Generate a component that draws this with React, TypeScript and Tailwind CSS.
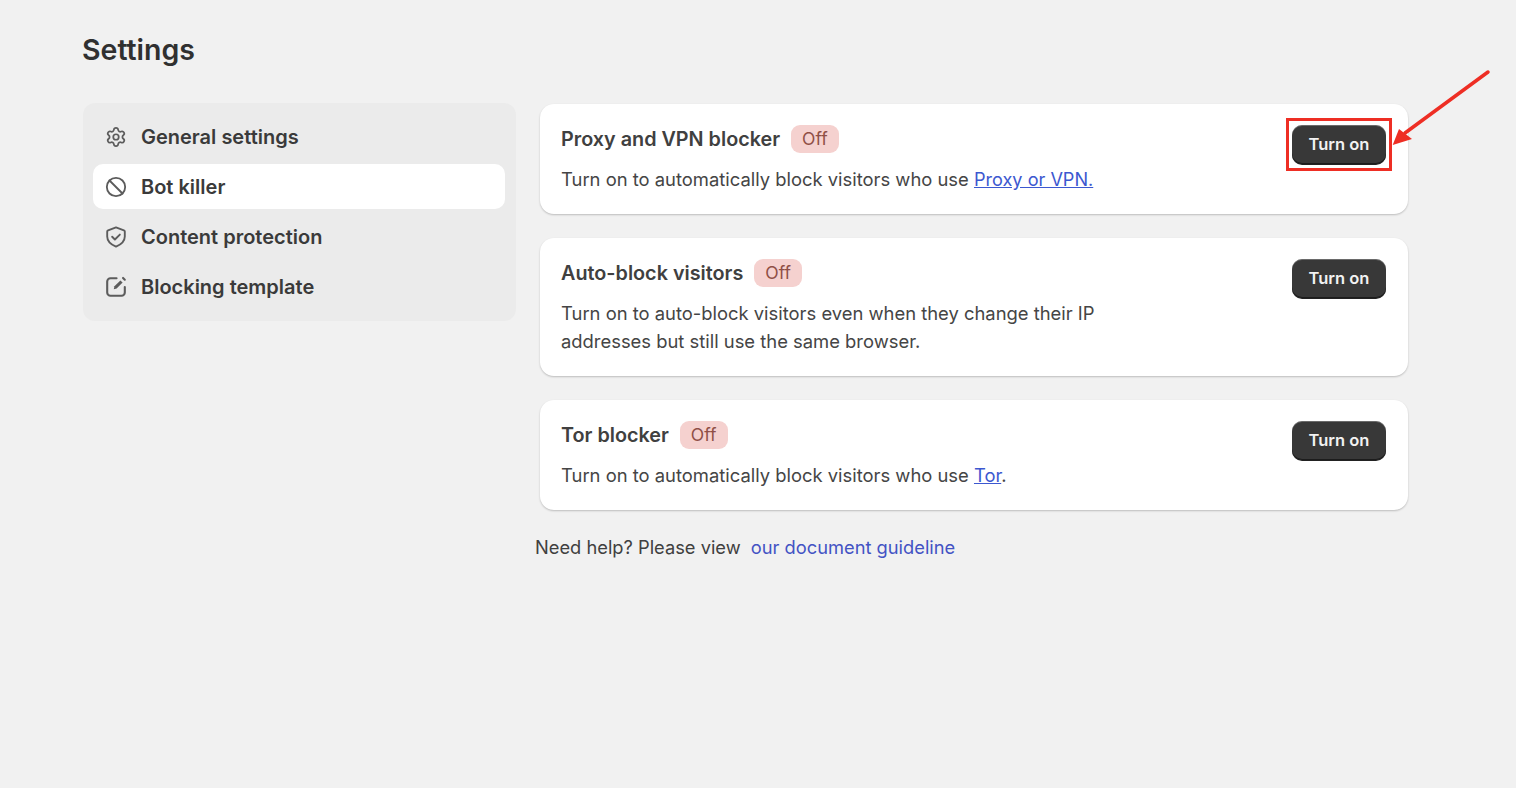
import type { ReactNode } from "react";
import { Ban, Settings } from "lucide-react";

const font = { fontFamily: "Inter, sans-serif" };

function ShieldIcon() {
  return (
    <svg viewBox="0 0 20 20" fill="none" stroke="#5c5c5c" strokeWidth="1.7" strokeLinecap="round" strokeLinejoin="round" className="h-[22px] w-[22px]">
      <path d="M10 1.200l7.200 2.700c.5.200.8.600.8 1.100v4.500c0 4.200-3.200 7.200-8 9.300-4.800-2.100-8-5.100-8-9.300V5c0-.5.3-.9.800-1.100z" />
      <path d="M6.500 9.800l2.500 2.500 4.500-4.500" />
    </svg>
  );
}

function EditIcon() {
  return (
    <svg viewBox="0 0 20 20" fill="none" stroke="#5c5c5c" strokeWidth="1.9" strokeLinecap="round" strokeLinejoin="round" className="h-[22px] w-[22px]">
      <path d="M10.500 2H5a3 3 0 0 0-3 3v10a3 3 0 0 0 3 3h10a3 3 0 0 0 3-3V10" />
      <path d="M8 12l.6-2.600 5.400-5.400 2 2-5.400 5.400z" fill="#5c5c5c" stroke="none" />
      <path d="M16.400 1.800l1.600 1.600" />
    </svg>
  );
}

function NavItem({ icon, label, active }: { icon: ReactNode; label: string; active?: boolean }) {
  return (
    <div className={`flex h-[45px] items-center gap-[14px] rounded-[10px] pl-[12px] ${active ? "bg-white" : ""}`}>
      {icon}
      <span className="text-[20px] font-semibold leading-none text-[#3a3a3a]">{label}</span>
    </div>
  );
}

function BlockerCard({ title, height, children, marked }: { title: string; height: string; children: ReactNode; marked?: boolean }) {
  return (
    <article className={`flex items-start justify-between rounded-[14px] bg-white pl-[21px] pr-[22px] pt-[21px] shadow-[0_1px_2px_rgba(0,0,0,0.22)] ${height}`}>
      <div>
        <div className="flex h-[28px] items-center gap-[11px] pt-[1px]">
          <h2 className="text-[19.8px] font-semibold leading-none text-[#404040]">{title}</h2>
          <span className="mt-[-1px] flex h-[28px] items-center rounded-[9px] bg-[#f5d1cf] px-[11px] text-[17.5px] text-[#8f4f46]">Off</span>
        </div>
        <div className="mt-[12px] w-[560px] text-[18.4px] leading-[28px] text-[#454545]">{children}</div>
      </div>
      <div className="relative">
        <button type="button" className="flex h-[39px] w-[94px] items-center justify-center rounded-[10px] bg-[#383838] text-[16.5px] font-semibold text-[#f2f2f2] shadow-[inset_0_1px_0_rgba(255,255,255,0.25),0_1px_0_#222,inset_0_-1px_0_#1c1c1c]">
          Turn on
        </button>
        {marked && <div className="absolute left-[-6px] top-[-7px] h-[53px] w-[106px] border-[3px] border-[#ee2e24]" />}
      </div>
    </article>
  );
}

export default function App() {
  return (
    <div style={font} className="relative min-h-[788px] overflow-hidden bg-[#f1f1f1] pl-[83px] pr-[108px] pt-[31px]">
      <h1 className="ml-[-1px] text-[28.5px] font-semibold leading-[38px] text-[#303030]">Settings</h1>
      <div className="mt-[34px] flex gap-[24px]">
        <nav className="flex h-[218px] w-[433px] shrink-0 flex-col gap-[5px] rounded-[12px] bg-[#ebebeb] pl-[10px] pr-[11px] pt-[11px]">
          <NavItem icon={<Settings size={22} color="#5c5c5c" strokeWidth={1.9} />} label="General settings" />
          <NavItem icon={<Ban size={22} color="#5c5c5c" strokeWidth={2} />} label="Bot killer" active />
          <NavItem icon={<ShieldIcon />} label="Content protection" />
          <NavItem icon={<EditIcon />} label="Blocking template" />
        </nav>
        <main className="min-w-0 flex-1 pt-[1px]">
          <div className="flex flex-col gap-[24px]">
            <BlockerCard title="Proxy and VPN blocker" height="h-[110px]" marked>
              Turn on to automatically block visitors who use{" "}
              <a className="text-[18.1px] text-[#3c58d0] underline">Proxy or VPN.</a>
            </BlockerCard>
            <BlockerCard title="Auto-block visitors" height="h-[138px]">
              Turn on to auto-block visitors even when they change their IP addresses but still use the same browser.
            </BlockerCard>
            <BlockerCard title="Tor blocker" height="h-[110px]">
              Turn on to automatically block visitors who use <a className="text-[#3c58d0] underline">Tor</a>.
            </BlockerCard>
          </div>
          <p className="ml-[-5px] mt-[23px] text-[18.3px] leading-[28px] text-[#404040]">
            Need help? Please view <a className="ml-[5px] text-[#4353c4]">our document guideline</a>
          </p>
        </main>
      </div>
      <svg className="absolute left-[1385px] top-[65px] h-[85px] w-[110px]" viewBox="0 0 110 85" fill="none">
        <path d="M103 7L20 68" stroke="#ee2e24" strokeWidth="3.500" strokeLinecap="round" />
        <path d="M7.700 80L14 64L27 74z" fill="#ee2e24" />
      </svg>
    </div>
  );
}
